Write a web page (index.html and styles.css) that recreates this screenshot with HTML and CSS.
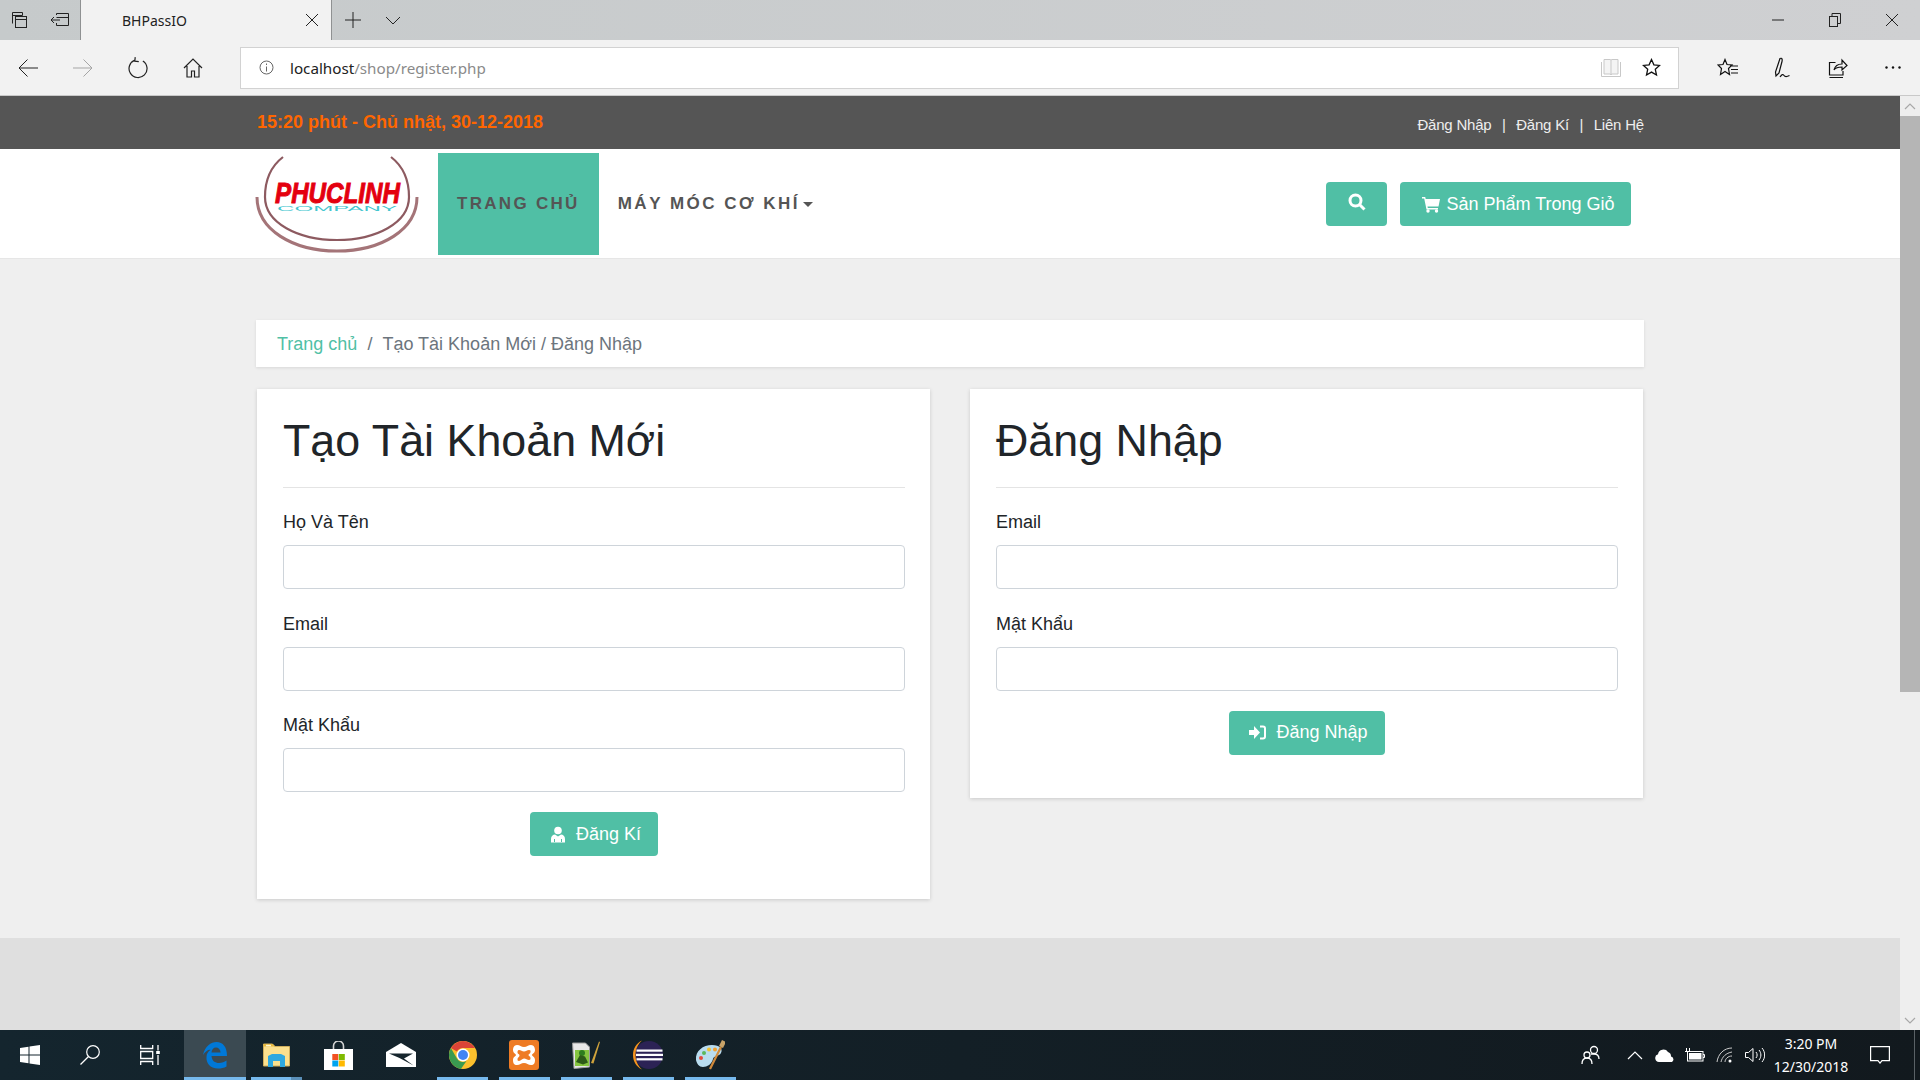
FILE: index.html

```html
<!DOCTYPE html>
<html lang="vi">
<head>
  <meta charset="UTF-8" />
  <meta name="viewport" content="width=device-width, initial-scale=1.0"/>
  <title>BHPassIO</title>
  <link rel="stylesheet" href="styles.css">
</head>
<body>
  <!-- browser window -->
  <div class="tabbar">
    <span class="tb-btn"><svg width="18" height="18" viewBox="0 0 18 18" fill="none" stroke="#222"><path d="M1.500 12.500V1.500h10v3M1.500 4.500h10"/><rect x="4.500" y="5.500" width="11" height="11"/><path d="M4.500 8.500h11"/></svg></span>
    <span class="tb-btn"><svg width="20" height="16" viewBox="0 0 20 16" fill="none" stroke="#222"><path d="M6.500 3V1.500h12v12h-12V11M6.500 5.500h12M1 8h9M4 5L1 8l3 3"/></svg></span>
    <div class="tab">
      <span class="tab-title">BHPassIO</span>
      <svg class="tab-close" width="14" height="14" viewBox="0 0 14 14" stroke="#222"><path d="M1 1l12 12M13 1L1 13"/></svg>
    </div>
    <span class="tb-btn"><svg width="16" height="16" viewBox="0 0 16 16" stroke="#222"><path d="M8 0v16M0 8h16"/></svg></span>
    <span class="tb-btn"><svg width="16" height="9" viewBox="0 0 16 9" fill="none" stroke="#222"><path d="M1 1l7 7 7-7"/></svg></span>
    <div class="spacer"></div>
    <span class="win-btn"><svg width="12" height="2" viewBox="0 0 12 2" stroke="#222"><path d="M0 1h12"/></svg></span>
    <span class="win-btn"><svg width="12" height="14" viewBox="0 0 12 14" fill="none" stroke="#222"><rect x="0.500" y="3.500" width="8" height="10"/><path d="M3 3.500v-3h8.500v10h-3"/></svg></span>
    <span class="win-btn"><svg width="14" height="14" viewBox="0 0 14 14" stroke="#222"><path d="M1 1l12 12M13 1L1 13"/></svg></span>
  </div>

  <div class="toolbar">
    <span class="nav-btn"><svg width="20" height="18" viewBox="0 0 20 18" fill="none" stroke="#222"><path d="M1 9h19M9.500 0.500L1 9l8.500 8.500"/></svg></span>
    <span class="nav-btn"><svg width="20" height="18" viewBox="0 0 20 18" fill="none" stroke="#a5a5a5"><path d="M0 9h19M10.500 0.500L19 9l-8.500 8.500"/></svg></span>
    <span class="nav-btn"><svg width="20" height="22" viewBox="0 0 20 22" fill="none" stroke="#222" stroke-width="1.200"><path d="M6 3.500A9 9 0 1 0 14 3.500M6 0.500v4h4" transform="rotate(6 10 12)"/></svg></span>
    <span class="nav-btn"><svg width="20" height="20" viewBox="0 0 20 20" fill="none" stroke="#222" stroke-width="1.200"><path d="M1 10l9-9 9 9M4 8v11h4.500v-6h3v6H16V8"/></svg></span>
    <div class="address">
      <svg class="addr-info" width="15" height="15" viewBox="0 0 15 15" fill="none" stroke="#666"><circle cx="7.500" cy="7.500" r="6.500"/><path d="M7.500 6.500v5M7.500 3.500v1.500"/></svg>
      <span class="addr-host">localhost</span><span class="addr-path">/shop/register.php</span>
      <div class="spacer"></div>
      <svg class="addr-read" width="20" height="18" viewBox="0 0 20 18" fill="#f4f4f4" stroke="#c8c8c8"><path d="M3 0.500h6.500l0.500 1 0.500-1H17V15h-6.500l-0.500 1-0.500-1H3z"/><path d="M0.500 3v14.500h19V3" fill="none"/><path d="M10 1.500V16" fill="none"/></svg>
      <svg class="addr-star" width="19" height="19" viewBox="0 0 19 19" fill="none" stroke="#111" stroke-width="1.300"><path d="M9.500 1.500l2.400 5.300 5.600 0.600-4.200 3.900 1.200 5.700-5-2.900-5 2.900 1.200-5.700-4.200-3.900 5.600-0.600z"/></svg>
    </div>
    <div class="tool-group">
      <span class="tool-btn"><svg width="22" height="20" viewBox="0 0 22 20" fill="none" stroke="#111" stroke-width="1.200"><path d="M8 1.500l2 5 5 0.500-3.500 3.500 1 6-4.500-3-4.500 3 1-6L1 7l5-0.500zM13 8h8M14 11.500h7M14 15h7"/></svg></span>
      <span class="tool-btn"><svg width="20" height="22" viewBox="0 0 20 22" fill="none" stroke="#111" stroke-width="1.200"><path d="M7 1.500c2-1 2.500 1 2 3L6 16l-3 3-0.500-4zM7 20c2-3 3-3 4-1.500s2.500 1.500 5.500 0"/></svg></span>
      <span class="tool-btn"><svg width="20" height="20" viewBox="0 0 20 20" fill="none" stroke="#111" stroke-width="1.200"><path d="M7.500 4.500H1.500V17H15v-4M6 12c1-4 4-6 8-6V2l5 5.500L14 12V9c-3 0-6 0-8 3zM1.500 19.500H15"/></svg></span>
      <span class="tool-btn"><svg width="16" height="3" viewBox="0 0 16 3" fill="#111"><circle cx="1.500" cy="1.500" r="1.200"/><circle cx="8" cy="1.500" r="1.200"/><circle cx="14.500" cy="1.500" r="1.200"/></svg></span>
    </div>
  </div>

  <div class="viewport">
    <div class="page">
      <div class="topbar">
        <span class="clock">15:20 phút - Chủ nhật, 30-12-2018</span>
        <div class="top-links">
          <a href="#">Đăng Nhập</a><span>|</span><a href="#">Đăng Kí</a><span>|</span><a href="#">Liên Hệ</a>
        </div>
      </div>

      <header class="header">
        <svg class="logo" width="162" height="103" viewBox="0 0 162 103" fill="none">
          <path d="M27 2C14 12 9 26 9 42c0 26 33 43 72 43s72-17 72-43c0-16-5-30-18-40" stroke="#8d5a60" stroke-width="2.200"/>
          <path d="M1 42c0 33 36 54 80 54s80-21 80-54" stroke="#a47478" stroke-width="3"/>
          <text x="19" y="48" class="logo-name" textLength="125" lengthAdjust="spacingAndGlyphs">PHUCLINH</text>
          <text x="21" y="55.500" class="logo-sub" textLength="120" lengthAdjust="spacingAndGlyphs">COMPANY</text>
        </svg>
        <nav class="menu">
          <a class="menu-item active" href="#">TRANG CHỦ</a>
          <a class="menu-item" href="#">MÁY MÓC CƠ KHÍ<i class="caret"></i></a>
        </nav>
        <div class="spacer"></div>
        <a class="btn btn-search" href="#"><svg width="18" height="18" viewBox="0 0 18 18" fill="none" stroke="#fff" stroke-width="3"><circle cx="7.500" cy="7.500" r="5.500"/><path d="M11.500 11.500l5 5"/></svg></a>
        <a class="btn btn-cart" href="#"><svg width="18" height="17" viewBox="0 0 18 17" fill="#fff"><path d="M0 1h3.200l0.500 2H18l-1.500 7.500H5.500l0.300 1.500H16v1.500H4.500L2.200 2.500H0z"/><circle cx="6" cy="15" r="1.700"/><circle cx="14.500" cy="15" r="1.700"/></svg>Sản Phẩm Trong Giỏ</a>
      </header>

      <main class="main">
        <div class="breadcrumb">
          <a href="#">Trang chủ</a><span class="sep">/</span><span>Tạo Tài Khoản Mới / Đăng Nhập</span>
        </div>
        <div class="cards">
          <section class="card">
            <h1>Tạo Tài Khoản Mới</h1>
            <hr>
            <div class="field">
              <label>Họ Và Tên</label>
              <input type="text">
            </div>
            <div class="field">
              <label>Email</label>
              <input type="text">
            </div>
            <div class="field">
              <label>Mật Khẩu</label>
              <input type="password">
            </div>
            <div class="actions">
              <button class="btn btn-form"><svg width="16" height="17" viewBox="0 0 16 17" fill="#fff"><circle cx="8" cy="4.500" r="3.800"/><path d="M1 16.500v-3.500c0-3 2-4.500 4-4.500l3 2 3-2c2 0 4 1.500 4 4.500v3.500z"/><path d="M4.500 16v-3M11.500 16v-3" stroke="#50bfa5"/></svg>Đăng Kí</button>
            </div>
          </section>
          <section class="card">
            <h1>Đăng Nhập</h1>
            <hr>
            <div class="field">
              <label>Email</label>
              <input type="text">
            </div>
            <div class="field">
              <label>Mật Khẩu</label>
              <input type="password">
            </div>
            <div class="actions">
              <button class="btn btn-form"><svg width="17" height="15" viewBox="0 0 17 15" fill="#fff"><path d="M0 5h5V1l6 6.500L5 14v-4H0z"/><path d="M11 1.500h3c1.200 0 2 0.800 2 2v8c0 1.200-0.800 2-2 2h-3" fill="none" stroke="#fff" stroke-width="2"/></svg>Đăng Nhập</button>
            </div>
          </section>
        </div>
      </main>
      <footer class="footer"></footer>
    </div>
    <div class="scrollbar">
      <span class="sb-arrow"><svg width="12" height="7" viewBox="0 0 12 7" fill="none" stroke="#a8a8a8" stroke-width="1.200"><path d="M1 6l5-5 5 5"/></svg></span>
      <div class="sb-thumb"></div>
      <div class="spacer"></div>
      <span class="sb-arrow"><svg width="12" height="7" viewBox="0 0 12 7" fill="none" stroke="#a8a8a8" stroke-width="1.200"><path d="M1 1l5 5 5-5"/></svg></span>
    </div>
  </div>

  <!-- windows taskbar -->
  <div class="taskbar">
    <span class="sys-btn"><svg width="20" height="20" viewBox="0 0 20 20" fill="#fff"><path d="M0 3l8.500-1.200v7.700H0zM9.500 1.600L20 0v9.500H9.500zM0 10.500h8.500v7.700L0 17zM9.500 10.500H20V20L9.500 18.400z"/></svg></span>
    <span class="sys-btn"><svg width="20" height="20" viewBox="0 0 20 20" fill="none" stroke="#fff" stroke-width="1.200"><circle cx="13" cy="7" r="6.300"/><path d="M8.500 11.500L0.500 19.500"/></svg></span>
    <span class="sys-btn"><svg width="20" height="20" viewBox="0 0 20 20" fill="none" stroke="#fff" stroke-width="1.300"><path d="M0.700 0v3.500h12V0M0.700 6.500h12v7h-12zM0.700 20v-3.500h12V20M18 0v5.500M18 10v10"/><rect x="16.200" y="6" width="3.600" height="3" fill="#fff" stroke="none"/></svg></span>
    <span class="task-btn open run"><svg width="24" height="27" viewBox="0 0 24 27"><path d="M0 13C2 4 8 0 13.500 0 20 0 24 5 24 14H8.500c0.500 5 3.500 7 7.500 7 3 0 5.500-1 7.500-2.500v6c-2.500 1.500-5.500 2-8.500 2-8 0-12-5.500-11.500-11.500 0-3 1.500-5.500 4-7C6 7 2.500 9 0 13z" fill="#0078d7"/><path d="M8.500 10.500h9C17.500 7.500 15.500 5.500 13 5.500S8.500 7.500 8.500 10.500z" fill="#3b4a52"/></svg></span>
    <span class="task-btn run multi"><svg width="27" height="24" viewBox="0 0 27 24"><path d="M0.500 1h9l2.500 2.500h14.500V23H0.500z" fill="#fbe08e" stroke="#cfae5c"/><path d="M0.500 1h9l2.500 2.500H0.500z" fill="#e7b93f"/><rect x="3" y="1.800" width="5" height="1.500" fill="#fff6d0"/><path d="M5 13l4-2h9l4 2v11h-5v-6h-7v6H5z" fill="#2ea8e0"/></svg></span>
    <span class="task-btn"><svg width="29" height="29" viewBox="0 0 29 29"><path d="M9.500 9V5a5 5 0 0 1 10 0v4" fill="none" stroke="#d4d4d4" stroke-width="1.600"/><rect x="0" y="8" width="29" height="21" fill="#fff"/><rect x="8.300" y="13" width="6" height="6" fill="#f25022"/><rect x="14.800" y="13" width="6" height="6" fill="#7fba00"/><rect x="8.300" y="19.500" width="6" height="6" fill="#00a4ef"/><rect x="14.800" y="19.500" width="6" height="6" fill="#ffb900"/></svg></span>
    <span class="task-btn"><svg width="30" height="24" viewBox="0 0 30 24"><path d="M0 9L15 0l15 9v15H0z" fill="#fff"/><path d="M3 10.500h24l-9 5 9.500 7-14-7.500z" fill="#16252d"/></svg></span>
    <span class="task-btn run"><svg width="28" height="28" viewBox="0 0 28 28"><circle cx="14" cy="14" r="14" fill="#fbc02d"/><path d="M1.900 7A14 14 0 0 1 26.100 7H14a7 7 0 0 0-6.100 3.500z" fill="#db4437"/><path d="M1.900 7l6 10.500a7 7 0 0 0 9.600 2.600L11.900 27.900A14 14 0 0 1 1.900 7z" fill="#3a9b50"/><circle cx="14" cy="14" r="6.500" fill="#fff"/><circle cx="14" cy="14" r="5" fill="#4285f4"/></svg></span>
    <span class="task-btn run"><svg width="30" height="30" viewBox="0 0 30 30"><rect width="30" height="30" rx="3" fill="#ee7b24"/><path d="M8 5c3 0 4 2 7 2s4-2 7-2 4 3 4 5c0 3-3 4-3 5s3 2 3 5c0 3-1 5-4 5s-4-2-7-2-4 2-7 2-4-2-4-5 3-4 3-5-3-2-3-5c0-2 1-5 4-5z" fill="#fff"/><path d="M10 10c2 0 3 1.500 5 1.500s3-1.500 5-1.500 1.500 1.500 1.500 2c0 1.500-2 2-2 3s2 1.500 2 3c0 1 0 2-1.500 2-2 0-3-1.500-5-1.500S12 21 10 21c-1.500 0-1.500-1-1.500-2 0-1.500 2-2 2-3.500s-2-1.500-2-3c0-1 0-2.500 1.500-2.500z" fill="#ee7b24"/></svg></span>
    <span class="task-btn run"><svg width="28" height="28" viewBox="0 0 28 28"><path d="M0.500 2h13l4 4v20L2 27.500z" fill="#e8e8e8" stroke="#9a9a9a"/><path d="M19 22L27 0.500l1 0.500-6.500 21.500z" fill="#d0a33c"/><rect x="3" y="9" width="14" height="16" fill="#86c540"/><circle cx="10" cy="12" r="3" fill="#2e7d1e"/><path d="M4 21l4-7 5 1.500 3 6-5 2z" fill="#2d5a18"/></svg></span>
    <span class="task-btn run"><svg width="30" height="30" viewBox="0 0 30 30"><circle cx="16" cy="15" r="14" fill="#2c2255"/><path d="M9 0.500C3.500 3 0 8.500 0 15s3.500 12 9 14.500C4.500 25.500 2.500 20.500 2.500 15S4.500 4.500 9 0.500z" fill="#f7941e"/><rect x="3.500" y="9.500" width="26" height="2.200" fill="#fff"/><rect x="3" y="13.800" width="27" height="2.200" fill="#fff"/><rect x="3.500" y="18.200" width="26" height="2.200" fill="#fff"/></svg></span>
    <span class="task-btn run"><svg width="30" height="30" viewBox="0 0 30 30"><path d="M1 20C0 11 8 5 17 5c8 0 11 4 9 8-2 4-7 2-8 6-1 5-6 8-10 8s-6-3-7-7z" fill="#b9dcef"/><circle cx="6" cy="18" r="2" fill="#e64a3b"/><circle cx="9" cy="13" r="2" fill="#5cb85c"/><circle cx="14" cy="9.500" r="2" fill="#f2c230"/><circle cx="20" cy="9.500" r="2" fill="#f2a030"/><path d="M15 29L26 7" stroke="#d08a3c" stroke-width="2.200"/><path d="M26 7L29 1" stroke="#c9a368" stroke-width="4.500"/></svg></span>

    <div class="spacer"></div>

    <span class="tray-people"><svg width="20" height="20" viewBox="0 0 20 20" fill="none" stroke="#fff" stroke-width="1.300"><circle cx="13" cy="5" r="3.500"/><circle cx="6" cy="10" r="3"/><path d="M1 19c0-4 2-6 5-6s5 2 5 6M10 9c1.500 0 2 0 3 0 3 0 5 2 5 5"/></svg></span>
    <span class="tray-btn"><svg width="16" height="9" viewBox="0 0 16 9" fill="none" stroke="#fff" stroke-width="1.200"><path d="M1 8l7-7 7 7"/></svg></span>
    <span class="tray-btn"><svg width="20" height="13" viewBox="0 0 20 13" fill="#fff"><path d="M4 13a4 4 0 0 1-1-7.800A5.500 5.500 0 0 1 13 3a4.500 4.500 0 0 1 3 4.500A3 3 0 0 1 17 13z"/></svg></span>
    <span class="tray-btn"><svg width="20" height="14" viewBox="0 0 20 14" fill="none" stroke="#fff"><rect x="2.500" y="3.500" width="15.500" height="9.500"/><rect x="4" y="5" width="12.500" height="6.500" fill="#fff" stroke="none"/><path d="M18 6.500h1.500v3H18M1.500 0v3M4.500 0v3M0 3.500h6"/></svg></span>
    <span class="tray-btn"><svg width="18" height="16" viewBox="0 0 18 16" fill="none" stroke="#ccc"><path d="M1 15C2 7 8 1 16 1M5 15c1-5 5-9 11-10M9 15c0-3 3-6 7-6"/><circle cx="14" cy="14" r="1.500" fill="#fff" stroke="none"/></svg></span>
    <span class="tray-btn"><svg width="20" height="16" viewBox="0 0 20 16" fill="none" stroke="#fff"><path d="M0.500 5.500h3L8 1.500v13l-4.500-4h-3zM11 5c1.500 2 1.500 4 0 6M14 3c2.500 3 2.500 7 0 10M17 1c3.500 4 3.500 10 0 14"/></svg></span>
    <div class="tray-clock"><span>3:20 PM</span><span>12/30/2018</span></div>
    <span class="tray-note"><svg width="20" height="18" viewBox="0 0 20 18" fill="none" stroke="#fff" stroke-width="1.200"><path d="M0.600 0.600h18.800v14H12l-2 2.500-2-2.500H0.600z"/></svg></span>
    <span class="show-desktop"></span>
  </div>
</body>
</html>
```

FILE: styles.css

```css
* {
  box-sizing: border-box;
}
body {
  margin: 0;
  height: 1080px;
  overflow: hidden;
  display: flex;
  flex-direction: column;
  font-family: "Liberation Sans", Arial, sans-serif;
  background: #efefef;
}
a {
  text-decoration: none;
}
.spacer {
  flex: 1;
}

/* browser chrome */
.tabbar {
  height: 40px;
  display: flex;
  align-items: stretch;
  background: linear-gradient(to right, #c6cacb, #cfd0d2);
}
.tb-btn {
  width: 40px;
  display: flex;
  align-items: center;
  justify-content: center;
}
.tab {
  width: 252px;
  margin-right: 1px;
  display: flex;
  align-items: center;
  padding: 0 12px 0 41px;
  background: #f2f2f2;
  border-left: 1px solid #8f9192;
  border-right: 1px solid #8f9192;
  font-family: "Noto Sans", sans-serif;
  font-size: 14px;
  color: #222;
}
.tab-title {
  flex: 1;
}
.win-btn {
  width: 57px;
  display: flex;
  align-items: center;
  justify-content: center;
}
.toolbar {
  height: 56px;
  display: flex;
  align-items: center;
  background: #f2f2f2;
  border-bottom: 1px solid #c9c9c9;
}
.nav-btn {
  width: 55px;
  display: flex;
  justify-content: center;
}
.address {
  flex: 1;
  height: 42px;
  margin-left: 20px;
  display: flex;
  align-items: center;
  padding: 0 17px 0 18px;
  background: #fff;
  border: 1px solid #d2d2d2;
  font-family: "Noto Sans", sans-serif;
  font-size: 15.2px;
}
.addr-info {
  margin-right: 16px;
}
.addr-host {
  color: #222;
}
.addr-path {
  color: #8a8a8a;
}
.addr-star {
  margin-left: 21px;
}
.tool-group {
  width: 219px;
  margin-left: 22px;
  display: flex;
}
.tool-btn {
  width: 54.75px;
  display: flex;
  align-items: center;
  justify-content: center;
}

/* page */
.viewport {
  height: 934px;
  display: flex;
}
.page {
  flex: 1;
  display: flex;
  flex-direction: column;
  min-width: 0;
}
.topbar {
  height: 53px;
  flex: none;
  display: flex;
  justify-content: space-between;
  align-items: center;
  padding: 0 257px;
  background: #555;
}
.clock {
  font-size: 18px;
  font-weight: bold;
  color: #ff6600;
  margin-top: -1px;
}
.top-links {
  display: flex;
  gap: 10.5px;
  margin: 3px -1px 0 0;
  font-size: 15px;
  color: #eee;
  letter-spacing: -0.2px;
}
.top-links a {
  color: #eee;
}
.header {
  height: 110px;
  flex: none;
  display: flex;
  align-items: flex-start;
  padding: 4px 269px 0 256px;
  background: #fff;
  border-bottom: 1px solid #e6e6e6;
}
.logo {
  flex: none;
  margin-top: 2px;
  overflow: visible;
}
.logo-name {
  font-family: "Liberation Sans", sans-serif;
  font-size: 30px;
  font-weight: bold;
  font-style: italic;
  fill: #e4000f;
  stroke: #e4000f;
  stroke-width: 1px;
}
.logo-sub {
  font-family: "Liberation Sans", sans-serif;
  font-size: 7px;
  fill: #43c6cf;
}
.menu {
  display: flex;
  margin-left: 20px;
}
.menu-item {
  height: 102px;
  display: flex;
  align-items: center;
  padding: 0 19px;
  font-size: 17px;
  font-weight: bold;
  letter-spacing: 2.3px;
  color: #555;
}
.menu-item.active {
  background: #50bfa5;
}
.menu-item:last-child {
  letter-spacing: 2.5px;
}
.caret {
  display: inline-block;
  margin-left: 3px;
  border-top: 5px solid #555;
  border-left: 5.5px solid transparent;
  border-right: 5.5px solid transparent;
}
.btn {
  display: inline-flex;
  align-items: center;
  justify-content: center;
  height: 44px;
  background: #50bfa5;
  border: none;
  border-radius: 4px;
  color: #fff;
  font-family: "Liberation Sans", sans-serif;
  font-size: 18px;
}
.btn-search {
  width: 61px;
  margin-top: 29px;
  padding-bottom: 4px;
}
.btn-cart {
  width: 231px;
  margin: 29px 0 0 13px;
  padding-left: 6px;
  gap: 6px;
}
.btn-form {
  gap: 10px;
  padding: 0 17px 0 20px;
}
.main {
  height: 679px;
  flex: none;
  padding: 61px 256px 0;
  background: #efefef;
}
.breadcrumb {
  height: 47px;
  display: flex;
  align-items: center;
  padding: 2px 21px 0;
  background: #fff;
  box-shadow: 0 1px 3px rgba(0, 0, 0, 0.1);
  font-size: 18px;
  color: #6c757d;
}
.breadcrumb a {
  color: #50bfa5;
}
.sep {
  margin: 0 10px;
}
.cards {
  display: grid;
  grid-template-columns: 673px 673px;
  gap: 40px;
  align-items: start;
  margin: 22px 0 0 1px;
}
.card {
  padding: 24px 25px 43px 26px;
  background: #fff;
  box-shadow: 0 1px 4px rgba(0, 0, 0, 0.16);
}
.card h1 {
  margin: 0;
  font-size: 44.8px;
  font-weight: normal;
  line-height: 55px;
  color: #212529;
}
.card hr {
  margin: 19px 0 21px;
  border: none;
  border-top: 1px solid #e4e4e4;
}
.field {
  margin-bottom: 21.5px;
}
.field:nth-last-child(2) {
  margin-bottom: 20px;
}
.field label {
  display: block;
  margin-bottom: 10px;
  font-size: 18px;
  line-height: 26px;
  color: #212529;
}
.field input {
  display: block;
  width: 100%;
  height: 44px;
  border: 1px solid #ced4da;
  border-radius: 4px;
  background: #fff;
}
.actions {
  display: flex;
  justify-content: center;
}
.footer {
  flex: 1;
  background: #dfdfdf;
}
.scrollbar {
  width: 20px;
  display: flex;
  flex-direction: column;
  background: #eeeeee;
}
.sb-arrow {
  height: 20px;
  display: flex;
  align-items: center;
  justify-content: center;
}
.sb-thumb {
  height: 576px;
  background: #b5b5b5;
}

/* taskbar */
.taskbar {
  height: 50px;
  flex: none;
  display: flex;
  align-items: stretch;
  background: linear-gradient(to right, #14252e, #12191e);
}
.sys-btn {
  width: 60px;
  display: flex;
  align-items: center;
  justify-content: center;
}
.sys-btn:nth-child(3) {
  width: 64px;
  padding-right: 4px;
}
.task-btn {
  position: relative;
  width: 61.9px;
  display: flex;
  align-items: center;
  justify-content: center;
}
.task-btn.open {
  background: #3b4a52;
}
.task-btn.run::after {
  content: "";
  position: absolute;
  left: 5.5px;
  right: 5.5px;
  bottom: 0;
  height: 3px;
  background: #76b9ed;
}
.task-btn.open.run::after {
  left: 0;
  right: 0;
}
.task-btn.multi::after {
  background: linear-gradient(to right, #76b9ed 78%, #5a8fb8 78%);
}
.tray-people {
  width: 52px;
  padding-right: 7px;
  display: flex;
  align-items: center;
  justify-content: center;
}
.tray-btn {
  width: 30px;
  display: flex;
  align-items: center;
  justify-content: center;
}
.tray-clock {
  width: 82px;
  display: flex;
  flex-direction: column;
  align-items: center;
  justify-content: center;
  gap: 4px;
  font-family: "Noto Sans", sans-serif;
  font-size: 14px;
  line-height: 19px;
  color: #fff;
}
.tray-note {
  width: 56px;
  display: flex;
  align-items: center;
  justify-content: center;
}
.show-desktop {
  width: 6px;
  margin-left: 6px;
  border-left: 1px solid #5a6166;
}
```
